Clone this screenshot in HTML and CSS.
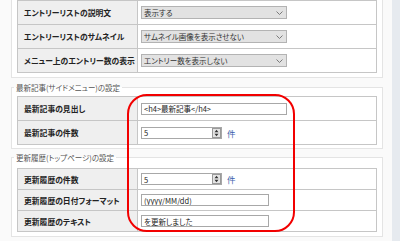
FILE: index.html
```html
<!DOCTYPE html>
<html lang="ja">
<head>
<meta charset="utf-8">
<title>設定</title>
<link rel="stylesheet" href="styles.css">
</head>
<body>
<div class="page">
  <main class="main">
    <div class="panel panel-top">
      <table class="form rows-24">
        <colgroup><col class="c-label"><col></colgroup>
        <tr>
          <th>エントリーリストの説明文</th>
          <td><span class="select"><span>表示する</span><svg class="chev" width="7" height="4" viewBox="0 0 7 4"><path d="M0.5 0.5 L3.5 3.5 L6.5 0.5" fill="none" stroke="#7a7a7a" stroke-width="1"/></svg></span></td>
        </tr>
        <tr>
          <th>エントリーリストのサムネイル</th>
          <td><span class="select"><span>サムネイル画像を表示させない</span><svg class="chev" width="7" height="4" viewBox="0 0 7 4"><path d="M0.5 0.5 L3.5 3.5 L6.5 0.5" fill="none" stroke="#7a7a7a" stroke-width="1"/></svg></span></td>
        </tr>
        <tr>
          <th>メニュー上のエントリー数の表示</th>
          <td><span class="select"><span>エントリー数を表示しない</span><svg class="chev" width="7" height="4" viewBox="0 0 7 4"><path d="M0.5 0.5 L3.5 3.5 L6.5 0.5" fill="none" stroke="#7a7a7a" stroke-width="1"/></svg></span></td>
        </tr>
      </table>
    </div>

    <fieldset class="panel group g2">
      <legend>最新記事(サイドメニュー)の設定</legend>
      <table class="form rows-24">
        <colgroup><col class="c-label"><col></colgroup>
        <tr>
          <th>最新記事の見出し</th>
          <td><input class="text wide" type="text" value="&lt;h4&gt;最新記事&lt;/h4&gt;"></td>
        </tr>
        <tr>
          <th>最新記事の件数</th>
          <td>
            <div class="numrow">
              <span class="num"><input type="text" value="5"><svg class="spin" width="9" height="10" viewBox="0 0 9 10"><rect x="0.5" y="0.5" width="8" height="9" fill="#e4e4e4" stroke="#9a9a9a"/><path d="M4.5 1.8 L6.5 4.2 H2.5Z M4.5 8.2 L6.5 5.8 H2.5Z" fill="#333"/></svg></span>
              <span class="unit">件</span>
            </div>
          </td>
        </tr>
      </table>
    </fieldset>

    <fieldset class="panel group g3">
      <legend>更新履歴(トップページ)の設定</legend>
      <table class="form rows-21">
        <colgroup><col class="c-label"><col></colgroup>
        <tr>
          <th>更新履歴の件数</th>
          <td>
            <div class="numrow">
              <span class="num"><input type="text" value="5"><svg class="spin" width="9" height="10" viewBox="0 0 9 10"><rect x="0.5" y="0.5" width="8" height="9" fill="#e4e4e4" stroke="#9a9a9a"/><path d="M4.5 1.8 L6.5 4.2 H2.5Z M4.5 8.2 L6.5 5.8 H2.5Z" fill="#333"/></svg></span>
              <span class="unit">件</span>
            </div>
          </td>
        </tr>
        <tr>
          <th>更新履歴の日付フォーマット</th>
          <td><input class="text mid" type="text" value="(yyyy/MM/dd)"></td>
        </tr>
        <tr>
          <th>更新履歴のテキスト</th>
          <td><input class="text mid" type="text" value="を更新しました"></td>
        </tr>
      </table>
    </fieldset>
  </main>
  <div class="strip"></div>
  <div class="highlight"></div>
</div>
</body>
</html>
```

FILE: styles.css
```css
* { box-sizing: border-box; }

html, body {
  margin: 0;
  height: 100%;
}

body {
  font-family: "Noto Sans CJK JP", "Noto Sans", sans-serif;
  font-feature-settings: "palt";
  background: #fafafa;
  color: #222;
  overflow: hidden;
}

.page {
  position: relative;
  display: flex;
  width: 400px;
  height: 241px;
}

.main {
  flex: 1;
  min-width: 0;
  padding: 0 9px 0 11px;
}

.strip {
  width: 8px;
  background: #e6eaef;
}

.panel {
  background: #fff;
  border: 1px solid #e4e4e4;
  padding: 0 5px 4px 5px;
  margin: 0;
  min-width: 0;
}

.panel-top {
  border-top: none;
}

.group legend {
  font-size: 7.5px;
  line-height: 9px;
  color: #555;
  padding: 0 2px;
  margin-left: -3px;
}

.g2 {
  margin-top: 5px;
  padding-top: 4px;
  padding-bottom: 3px;
}

.g3 {
  margin-top: 4px;
  padding-top: 6px;
  padding-bottom: 4px;
}

.form {
  width: 100%;
  border-collapse: collapse;
  table-layout: fixed;
}

.c-label { width: 120px; }

.form th,
.form td {
  border: 1px solid #c6c6c6;
  padding: 0;
  vertical-align: middle;
}

.form th {
  background: #efefef;
  text-align: left;
  font-size: 7.8px;
  font-weight: bold;
  color: #222;
  padding-left: 6px;
  white-space: nowrap;
}

.form td {
  padding-left: 3px;
}

.rows-24 tr { height: 24px; }
.rows-21 tr { height: 21px; }

.select {
  display: flex;
  align-items: center;
  justify-content: space-between;
  width: 146px;
  height: 13px;
  background: #e2e2e2;
  border: 1px solid #b3b3b3;
  font-size: 7.5px;
  line-height: 11px;
  padding: 0 3px 0 2px;
  color: #333;
  white-space: nowrap;
}

.chev { flex: none; }

.text {
  display: block;
  height: 12px;
  border: 1px solid #a8a8a8;
  font-family: "Noto Sans CJK JP", "Noto Sans", sans-serif;
  font-feature-settings: "palt";
  font-size: 7.5px;
  padding: 0 2px;
  color: #222;
  background: #fff;
  outline: none;
}

.wide { width: 146px; }
.mid { width: 128px; }

.numrow {
  display: flex;
  align-items: center;
}

.num {
  display: flex;
  align-items: center;
  width: 81px;
  height: 12px;
  border: 1px solid #a8a8a8;
  background: #fff;
}

.num input {
  flex: 1;
  min-width: 0;
  height: 100%;
  border: none;
  padding: 0 2px;
  font-family: "Noto Sans CJK JP", "Noto Sans", sans-serif;
  font-size: 7.5px;
  color: #222;
  background: transparent;
  outline: none;
}

.spin { flex: none; }

.unit {
  margin-left: 5px;
  color: #3b62ad;
  font-size: 8.5px;
  line-height: 10px;
}

.highlight {
  position: absolute;
  left: 127px;
  top: 94px;
  width: 168px;
  height: 138px;
  border: 2.5px solid #f20000;
  border-radius: 20px;
  pointer-events: none;
}
```
